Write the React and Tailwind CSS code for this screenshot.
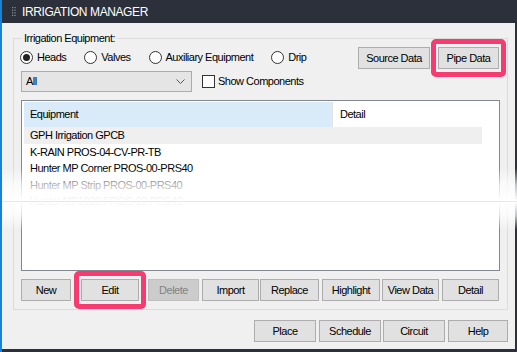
import React from 'react';

const Btn = ({ children, className = '', disabled = false, highlight = false }) => (
    <div className={`relative ${className}`}>
        <div
            className={`h-[22px] w-full flex items-center justify-center border ${
                disabled ? 'bg-[#cccccc] border-[#bfbfbf] text-[#838383]' : 'bg-[#e1e1e1] border-[#adadad] text-black'
            }`}
        >
            {children}
        </div>
        {highlight && (
            <div className="absolute -left-[7px] -right-[7px] -top-[8px] -bottom-[8px] border-[5px] border-[#f53b70] rounded-[5px]"></div>
        )}
    </div>
);

const Radio = ({ checked, label, className = '' }) => (
    <div className={`flex items-center ${className}`}>
        <div className="w-[13px] h-[13px] rounded-full border border-[#333333] bg-white flex items-center justify-center">
            {checked && <div className="w-[7px] h-[7px] rounded-full bg-[#222222]"></div>}
        </div>
        <span className="ml-[4px]">{label}</span>
    </div>
);

const rows = [
    { name: 'GPH Irrigation GPCB', selected: true },
    { name: 'K-RAIN PROS-04-CV-PR-TB' },
    { name: 'Hunter MP Corner PROS-00-PRS40' },
    { name: 'Hunter MP Strip PROS-00-PRS40' },
    { name: 'Hunter MP1000 PROS-00-PRS40' },
];

export default function App() {
    return (
        <div className="w-[517px] h-[352px] relative overflow-hidden bg-[#2b303b] border-l-2 border-[#1683d8] font-['Liberation_Sans',Arial,sans-serif] text-[11px] tracking-[-0.5px] text-black">
            {/* Title bar */}
            <div className="h-[23px] flex items-center">
                <svg width="4" height="10" viewBox="0 0 4 10" className="ml-[10px]">
                    {[0, 1, 2, 3].map((r) => (
                        <g key={r} fill="#8d929c">
                            <rect x="0" y={r * 2.6} width="1.2" height="1.2" />
                            <rect x="2.4" y={r * 2.6} width="1.2" height="1.2" />
                        </g>
                    ))}
                </svg>
                <span className="ml-[6px] text-white text-[12px] tracking-[-0.4px]">IRRIGATION MANAGER</span>
            </div>

            {/* Body */}
            <div className="h-[326px] mr-[2px] bg-[#f0f0f0] flex flex-col">
                <fieldset className="mt-[9px] ml-[11px] mr-[7px] h-[278px] border border-[#dcdcdc] px-[7px]">
                    <legend className="ml-[1px] px-[2px] leading-[13px]">Irrigation Equipment:</legend>

                    <div className="flex justify-between items-start">
                        <div className="flex flex-col">
                            <div className="flex items-center mt-[6px] h-[13px] -ml-[1px]">
                                <Radio checked label="Heads" />
                                <Radio label="Valves" className="ml-[18px]" />
                                <Radio label="Auxiliary Equipment" className="ml-[18px]" />
                                <Radio label="Drip" className="ml-[18px]" />
                            </div>
                            <div className="flex items-center mt-[7px]">
                                <div className="w-[171px] h-[21px] bg-[#e5e5e5] border border-[#acacac] flex items-center justify-between pl-[4px] pr-[6px]">
                                    <span>All</span>
                                    <svg width="9" height="5" viewBox="0 0 9 5">
                                        <path d="M0.5 0.5 L4.5 4.5 L8.5 0.5" fill="none" stroke="#555" strokeWidth="1" />
                                    </svg>
                                </div>
                                <div className="ml-[10px] w-[13px] h-[13px] border border-[#333333] bg-white"></div>
                                <span className="ml-[3px]">Show Components</span>
                            </div>
                        </div>
                        <div className="flex mt-[2px] mr-[1px]">
                            <Btn className="w-[72px]">Source Data</Btn>
                            <Btn className="w-[61px] ml-[8px]" highlight>Pipe Data</Btn>
                        </div>
                    </div>

                    {/* List */}
                    <div className="mt-[8px] h-[171px] border border-[#828790] bg-white pt-[1px] pl-[2px]">
                        <div className="w-[458px] h-[25px] flex">
                            <div className="w-[308px] bg-[#d9ebf9] flex items-center pl-[6px]">Equipment</div>
                            <div className="flex-1 flex items-center pl-[7px] border-l border-[#e5e5e5]">Detail</div>
                        </div>
                        {rows.map((r) => (
                            <div
                                key={r.name}
                                className={`w-[458px] h-[16.5px] flex items-center pl-[6px] ${r.selected ? 'bg-[#efefef]' : ''}`}
                            >
                                {r.name}
                            </div>
                        ))}
                    </div>

                    {/* Action buttons */}
                    <div className="flex mt-[8px]">
                        <Btn className="w-[50px]">New</Btn>
                        <Btn className="w-[58px] ml-[10px]" highlight>Edit</Btn>
                        <Btn className="w-[51px] ml-[9px]" disabled>Delete</Btn>
                        <Btn className="w-[57px] ml-[3px]">Import</Btn>
                        <Btn className="w-[59px] ml-[1px]">Replace</Btn>
                        <Btn className="w-[58px] ml-[3px]">Highlight</Btn>
                        <Btn className="w-[57px] ml-[2px]">View Data</Btn>
                        <Btn className="w-[57px] ml-[3px]">Detail</Btn>
                    </div>
                </fieldset>

                {/* Bottom buttons */}
                <div className="flex justify-end mt-[10px] mr-[7px]">
                    <Btn className="w-[62px]">Place</Btn>
                    <Btn className="w-[62px] ml-[3px]">Schedule</Btn>
                    <Btn className="w-[62px] ml-[2px]">Circuit</Btn>
                    <Btn className="w-[60px] ml-[3px]">Help</Btn>
                </div>
            </div>

            {/* Torn-edge fade over the middle of the screenshot */}
            <div className="absolute -left-[2px] right-0 top-[168px] h-[33px] bg-gradient-to-b from-white/0 via-white/70 to-white"></div>
            <div className="absolute -left-[2px] right-0 top-[201px] h-[1px] bg-[#e8e8e8]"></div>
            <div className="absolute -left-[2px] right-0 top-[202px] h-[28px] bg-gradient-to-b from-white via-white/70 to-white/0"></div>
        </div>
    );
}
